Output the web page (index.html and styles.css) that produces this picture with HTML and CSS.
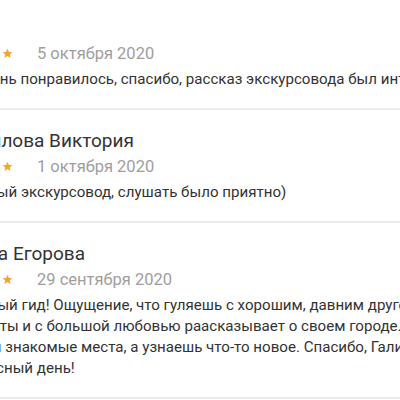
FILE: index.html
```html
<!DOCTYPE html>
<html lang="ru">
<head>
    <meta charset="UTF-8">
    <meta name="viewport" content="width=device-width, initial-scale=1.0">
    <title>Отзывы об экскурсии</title>
    <link rel="stylesheet" href="styles.css">
</head>
<body>
    <div class="reviews">
        <!-- Отзыв 1 -->
        <div class="review">
            <div class="review-name">Анна</div>
            <div class="review-meta">
                <div class="stars">
                    <svg viewBox="0 0 24 24"><path d="M12 1.5l3.1 7.1 7.6.6-5.8 5 1.8 7.5L12 17.7l-6.7 4 1.8-7.5-5.8-5 7.6-.6z"/></svg>
                    <svg viewBox="0 0 24 24"><path d="M12 1.5l3.1 7.1 7.6.6-5.8 5 1.8 7.5L12 17.7l-6.7 4 1.8-7.5-5.8-5 7.6-.6z"/></svg>
                    <svg viewBox="0 0 24 24"><path d="M12 1.5l3.1 7.1 7.6.6-5.8 5 1.8 7.5L12 17.7l-6.7 4 1.8-7.5-5.8-5 7.6-.6z"/></svg>
                    <svg viewBox="0 0 24 24"><path d="M12 1.5l3.1 7.1 7.6.6-5.8 5 1.8 7.5L12 17.7l-6.7 4 1.8-7.5-5.8-5 7.6-.6z"/></svg>
                    <svg viewBox="0 0 24 24"><path d="M12 1.5l3.1 7.1 7.6.6-5.8 5 1.8 7.5L12 17.7l-6.7 4 1.8-7.5-5.8-5 7.6-.6z"/></svg>
                </div>
                <span class="review-date">5 октября 2020</span>
            </div>
            <p class="review-text">Всё очень понравилось, спасибо, рассказ экскурсовода был интересным и познавательным.</p>
        </div>

        <!-- Отзыв 2 -->
        <div class="review">
            <div class="review-name">Корнилова Виктория</div>
            <div class="review-meta">
                <div class="stars">
                    <svg viewBox="0 0 24 24"><path d="M12 1.5l3.1 7.1 7.6.6-5.8 5 1.8 7.5L12 17.7l-6.7 4 1.8-7.5-5.8-5 7.6-.6z"/></svg>
                    <svg viewBox="0 0 24 24"><path d="M12 1.5l3.1 7.1 7.6.6-5.8 5 1.8 7.5L12 17.7l-6.7 4 1.8-7.5-5.8-5 7.6-.6z"/></svg>
                    <svg viewBox="0 0 24 24"><path d="M12 1.5l3.1 7.1 7.6.6-5.8 5 1.8 7.5L12 17.7l-6.7 4 1.8-7.5-5.8-5 7.6-.6z"/></svg>
                    <svg viewBox="0 0 24 24"><path d="M12 1.5l3.1 7.1 7.6.6-5.8 5 1.8 7.5L12 17.7l-6.7 4 1.8-7.5-5.8-5 7.6-.6z"/></svg>
                    <svg viewBox="0 0 24 24"><path d="M12 1.5l3.1 7.1 7.6.6-5.8 5 1.8 7.5L12 17.7l-6.7 4 1.8-7.5-5.8-5 7.6-.6z"/></svg>
                </div>
                <span class="review-date">1 октября 2020</span>
            </div>
            <p class="review-text">Чудесный экскурсовод, слушать было приятно)</p>
        </div>

        <!-- Отзыв 3 -->
        <div class="review">
            <div class="review-name">Регина Егорова</div>
            <div class="review-meta">
                <div class="stars">
                    <svg viewBox="0 0 24 24"><path d="M12 1.5l3.1 7.1 7.6.6-5.8 5 1.8 7.5L12 17.7l-6.7 4 1.8-7.5-5.8-5 7.6-.6z"/></svg>
                    <svg viewBox="0 0 24 24"><path d="M12 1.5l3.1 7.1 7.6.6-5.8 5 1.8 7.5L12 17.7l-6.7 4 1.8-7.5-5.8-5 7.6-.6z"/></svg>
                    <svg viewBox="0 0 24 24"><path d="M12 1.5l3.1 7.1 7.6.6-5.8 5 1.8 7.5L12 17.7l-6.7 4 1.8-7.5-5.8-5 7.6-.6z"/></svg>
                    <svg viewBox="0 0 24 24"><path d="M12 1.5l3.1 7.1 7.6.6-5.8 5 1.8 7.5L12 17.7l-6.7 4 1.8-7.5-5.8-5 7.6-.6z"/></svg>
                    <svg viewBox="0 0 24 24"><path d="M12 1.5l3.1 7.1 7.6.6-5.8 5 1.8 7.5L12 17.7l-6.7 4 1.8-7.5-5.8-5 7.6-.6z"/></svg>
                </div>
                <span class="review-date">29 сентября 2020</span>
            </div>
            <p class="review-text">Отличный гид! Ощущение, что гуляешь с хорошим, давним другом, который знает все тайны<br>и красоты и с большой любовью раасказывает о своем городе.<br>Вроде и знакомые места, а узнаешь что-то новое. Спасибо, Галина, за<br>прекрасный день!</p>
        </div>
    </div>
</body>
</html>
```

FILE: styles.css
```css
body {
    font-family: Roboto, "Liberation Sans", sans-serif;
    background-color: #fff;
    margin: 0;
    overflow: hidden;
}

/* Список отзывов */
.reviews {
    width: 560px;
    margin: -3px 0 0 -54px;
}

.review {
    padding: 19px 0 18px;
    border-bottom: 2px solid #ebebeb;
}

.review-name {
    font-size: 19px;
    line-height: 24px;
    color: #333;
    white-space: nowrap;
}

.review-meta {
    display: flex;
    align-items: center;
    height: 24px;
    margin-top: 1px;
}

.stars {
    display: flex;
    gap: 3px;
}

.stars svg {
    width: 11px;
    height: 11px;
    fill: #f5a623;
}

.review-date {
    margin-left: 24px;
    font-size: 16.5px;
    color: #9e9e9e;
}

.review-text {
    margin: 4px 0 0;
    font-size: 15.1px;
    line-height: 21px;
    color: #333;
    white-space: nowrap;
}
```
